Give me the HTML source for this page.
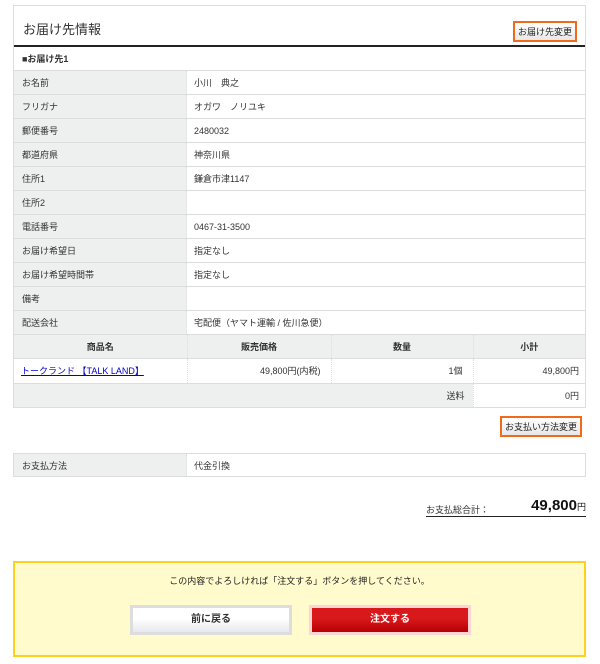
<!DOCTYPE html>
<html><head><meta charset="utf-8"><style>
*{margin:0;padding:0;box-sizing:border-box}
body{width:600px;height:664px;background:#fff;font-family:"Liberation Sans","Noto Sans CJK JP",sans-serif;font-size:9px;color:#333;position:relative}
.box{position:absolute;left:13px;top:5px;width:573px;border:1px solid #ddd;border-bottom:none}
.hd{height:41px;border-bottom:2px solid #222;position:relative}
.hd h2{position:absolute;left:9px;top:13px;font-size:13px;font-weight:normal;color:#333}
.btn{position:absolute;border:2px solid #f06a1a;background:linear-gradient(#fff,#e8e8e8);font-size:9px;padding:2px 3px;color:#222;white-space:nowrap}
.r{height:24px;border-bottom:1px solid #ddd;display:flex;align-items:center}
.l{width:173px;height:100%;background:#eef0ef;display:flex;align-items:center;padding-left:8px;border-right:1px dotted #ddd}
.v{padding-left:7px}
table{border-collapse:collapse;width:100%}
td,th{border-bottom:1px solid #ddd;border-right:1px dotted #ddd;font-size:9px;padding-top:0;padding-bottom:0}
th{background:#eef0ef}
.ptab{position:absolute;left:13px;top:453px;width:573px;border:1px solid #ddd;display:flex;height:24px;align-items:center}
</style></head><body>
<div class="box">
 <div class="hd"><h2>お届け先情報</h2><div class="btn" style="right:8px;top:15px">お届け先変更</div></div>
 <div class="r" style="padding-left:8px;font-weight:bold">■お届け先1</div>
 <div class="r"><div class="l">お名前</div><div class="v">小川　典之</div></div>
 <div class="r"><div class="l">フリガナ</div><div class="v">オガワ　ノリユキ</div></div>
 <div class="r"><div class="l">郵便番号</div><div class="v">2480032</div></div>
 <div class="r"><div class="l">都道府県</div><div class="v">神奈川県</div></div>
 <div class="r"><div class="l">住所1</div><div class="v">鎌倉市津1147</div></div>
 <div class="r"><div class="l">住所2</div><div class="v"></div></div>
 <div class="r"><div class="l">電話番号</div><div class="v">0467-31-3500</div></div>
 <div class="r"><div class="l">お届け希望日</div><div class="v">指定なし</div></div>
 <div class="r"><div class="l">お届け希望時間帯</div><div class="v">指定なし</div></div>
 <div class="r"><div class="l">備考</div><div class="v"></div></div>
 <div class="r" style="height:24px"><div class="l">配送会社</div><div class="v">宅配便（ヤマト運輸 / 佐川急便）</div></div>
 <table>
  <tr style="height:23px"><th style="width:173px">商品名</th><th style="width:144px">販売価格</th><th style="width:142px">数量</th><th style="border-right:none">小計</th></tr>
  <tr style="height:25px"><td style="padding-left:7px"><a style="color:#00c;text-decoration:underline">トークランド 【TALK LAND】</a></td><td style="text-align:right;padding-right:10px">49,800円(内税)</td><td style="text-align:right;padding-right:10px">1個</td><td style="text-align:right;padding-right:6px;border-right:none">49,800円</td></tr>
  <tr style="height:24px"><td colspan="3" style="background:#eef0ef;text-align:right;padding-right:8px">送料</td><td style="text-align:right;padding-right:6px;border-right:none">0円</td></tr>
 </table>
</div>
<div class="btn" style="left:500px;top:416px">お支払い方法変更</div>
<div class="ptab"><div class="l" style="height:100%">お支払方法</div><div class="v">代金引換</div></div>
<div style="position:absolute;left:426px;top:497px;width:160px;height:20px;border-bottom:1px solid #222">
 <span style="position:absolute;left:0;top:6px">お支払総合計：</span>
 <span style="position:absolute;right:0;top:0;font-size:15px;font-weight:bold;color:#111">49,800<span style="font-size:9px;font-weight:normal">円</span></span>
</div>
<div style="position:absolute;left:13px;top:561px;width:573px;height:96px;background:#fffbcc;border:2px solid #fcd21c">
 <div style="text-align:center;margin-top:11px;color:#222">この内容でよろしければ「注文する」ボタンを押してください。</div>
 <div style="position:absolute;left:115px;top:42px;width:162px;height:30px;border:3px solid #ddd;background:linear-gradient(#fff 45%,#e8e8ee);text-align:center;line-height:24px;font-weight:bold;font-size:10px;color:#333">前に戻る</div>
 <div style="position:absolute;left:294px;top:42px;width:162px;height:30px;border:3px solid #fcd4d4;background:linear-gradient(#d8181b 45%,#b60005);text-align:center;line-height:24px;font-weight:bold;font-size:10px;color:#fff">注文する</div>
</div>
</body></html>
